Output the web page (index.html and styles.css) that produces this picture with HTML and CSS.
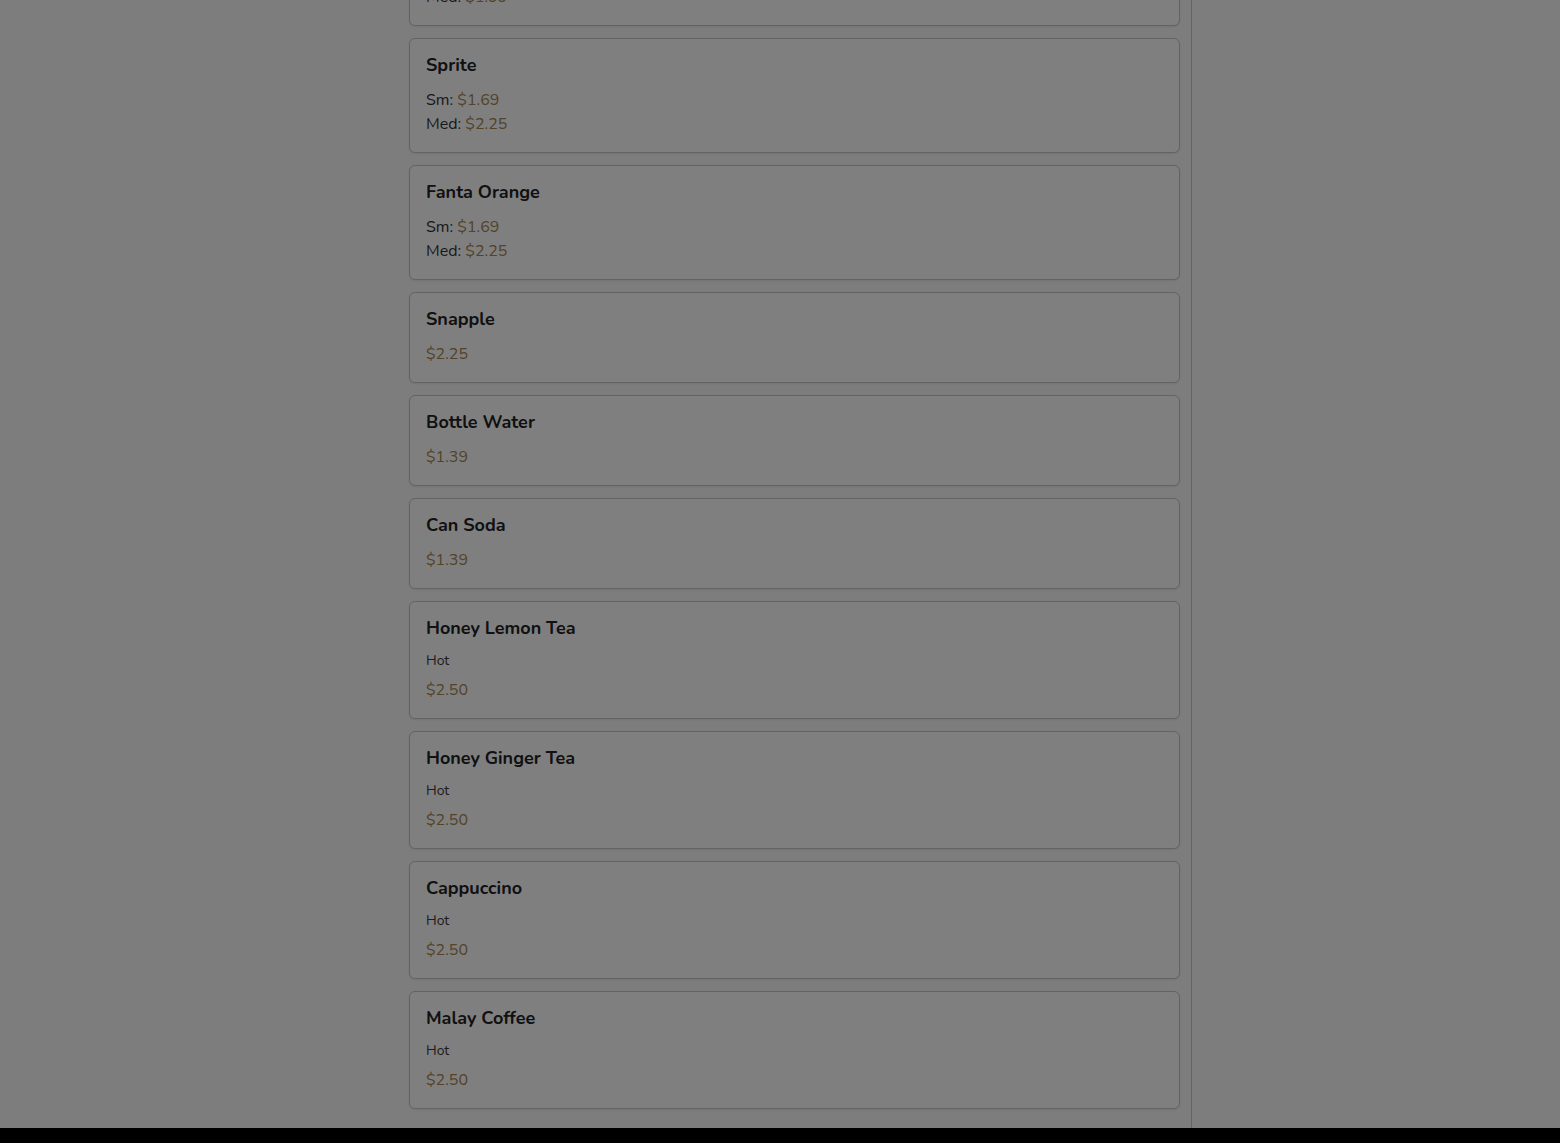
FILE: index.html
```html
<!DOCTYPE html>
<html lang="en">
<head>
<meta charset="utf-8">
<title>Menu - Drinks</title>
<link rel="stylesheet" href="styles.css">
</head>
<body>
<div class="layout">
  <main class="main">
    <div class="list">
      <div class="card">
        <div class="name">Coke</div>
        <div class="prices">
          <div class="row">Sm: <span class="price">$1.69</span></div>
          <div class="row">Med: <span class="price">$1.99</span></div>
        </div>
      </div>
      <div class="card">
        <div class="name">Sprite</div>
        <div class="prices">
          <div class="row">Sm: <span class="price">$1.69</span></div>
          <div class="row">Med: <span class="price">$2.25</span></div>
        </div>
      </div>
      <div class="card">
        <div class="name">Fanta Orange</div>
        <div class="prices">
          <div class="row">Sm: <span class="price">$1.69</span></div>
          <div class="row">Med: <span class="price">$2.25</span></div>
        </div>
      </div>
      <div class="card">
        <div class="name">Snapple</div>
        <div class="prices"><div class="row"><span class="price">$2.25</span></div></div>
      </div>
      <div class="card">
        <div class="name">Bottle Water</div>
        <div class="prices"><div class="row"><span class="price">$1.39</span></div></div>
      </div>
      <div class="card">
        <div class="name">Can Soda</div>
        <div class="prices"><div class="row"><span class="price">$1.39</span></div></div>
      </div>
      <div class="card">
        <div class="name">Honey Lemon Tea</div>
        <div class="desc">Hot</div>
        <div class="prices tight"><div class="row"><span class="price">$2.50</span></div></div>
      </div>
      <div class="card">
        <div class="name">Honey Ginger Tea</div>
        <div class="desc">Hot</div>
        <div class="prices tight"><div class="row"><span class="price">$2.50</span></div></div>
      </div>
      <div class="card">
        <div class="name">Cappuccino</div>
        <div class="desc">Hot</div>
        <div class="prices tight"><div class="row"><span class="price">$2.50</span></div></div>
      </div>
      <div class="card">
        <div class="name">Malay Coffee</div>
        <div class="desc">Hot</div>
        <div class="prices tight"><div class="row"><span class="price">$2.50</span></div></div>
      </div>
    </div>
  </main>
  <aside class="side"></aside>
</div>
<div class="overlay"></div>
<div class="bottombar"></div>
</body>
</html>
```

FILE: styles.css
```css
html, body {
  margin: 0;
  padding: 0;
  height: 1143px;
  overflow: hidden;
  background: #fafafa;
  font-family: "Nunito", "Open Sans", "Noto Sans", sans-serif;
  color: #2b2b2b;
}
.layout {
  display: flex;
  height: 1128px;
  overflow: hidden;
}
.main {
  width: 1191px;
  flex: none;
  border-right: 1px solid #c8c8c8;
  overflow: hidden;
}
.side {
  flex: 1;
}
.list {
  margin-top: -89px;
  margin-left: 409px;
  width: 771px;
  display: flex;
  flex-direction: column;
  gap: 12px;
}
.card {
  background: #ffffff;
  border: 1px solid #c6c6c6;
  border-radius: 6px;
  padding: 16px;
  box-shadow: 0 1px 2px rgba(0,0,0,0.08);
}
.name {
  font-size: 18px;
  line-height: 20px;
  font-weight: 700;
  color: #222222;
}
.prices {
  margin-top: 13px;
  font-size: 16px;
  line-height: 24px;
  color: #333333;
}
.prices.tight {
  margin-top: 7px;
}
.desc {
  margin-top: 13px;
  font-size: 14px;
  line-height: 20px;
  color: #3a3a3a;
}
.price {
  color: #a68650;
}
.overlay {
  position: fixed;
  inset: 0;
  background: rgba(0,0,0,0.5);
}
.bottombar {
  position: fixed;
  left: 0;
  right: 0;
  bottom: 0;
  height: 15px;
  background: #000;
}
```
